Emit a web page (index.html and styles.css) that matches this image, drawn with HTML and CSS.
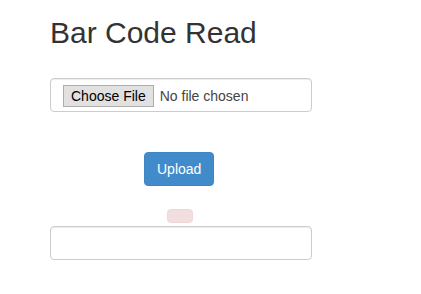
FILE: index.html
```html
<!DOCTYPE html>
<html lang="en">
<head>
<meta charset="utf-8">
<title>Bar Code Read</title>
<link rel="stylesheet" href="styles.css">
</head>
<body>
<div class="container">
  <h2 class="title">Bar Code Read</h2>
  <form class="form">
    <input class="form-control file-input" type="file" name="file">
    <div class="btn-row">
      <button class="btn btn-primary" type="button">Upload</button>
    </div>
    <div class="alert alert-danger"></div>
    <input class="form-control result" type="text">
  </form>
</div>
</body>
</html>
```

FILE: styles.css
```css
html, body {
  margin: 0;
  padding: 0;
  background: #fff;
}
body {
  font-family: "Liberation Sans", Arial, Helvetica, sans-serif;
  font-size: 14px;
  line-height: 1.42857;
  color: #333;
}
.container {
  padding: 16px 0 0 50px;
  width: 262px;
}
.title {
  margin: 0 0 29px;
  font-size: 30px;
  line-height: 33px;
  font-weight: 500;
  color: #333;
}
.form {
  display: flex;
  flex-direction: column;
  align-items: flex-start;
}
.form-control {
  display: block;
  box-sizing: border-box;
  width: 262px;
  height: 34px;
  margin: 0;
  padding: 6px 12px;
  font-family: "Liberation Sans", Arial, sans-serif;
  font-size: 14px;
  line-height: 20px;
  color: #555;
  background: #fff;
  border: 1px solid #ccc;
  border-radius: 4px;
  box-shadow: inset 0 1px 1px rgba(0, 0, 0, 0.075);
  outline: none;
}
.file-input {
  padding-top: 6px;
  color: #444;
}
.file-input::file-selector-button {
  font-family: "Liberation Sans", Arial, sans-serif;
  font-size: 14px;
  line-height: 16px;
  height: 22px;
  padding: 2px 7px;
  margin: 0 6px 0 0;
  color: #000;
  background: #e1e1e1;
  border: 1px solid #adadad;
  border-radius: 0;
}
.btn-row {
  margin: 40px 0 0 94px;
}
.btn {
  display: inline-block;
  box-sizing: border-box;
  height: 34px;
  padding: 6px 12px;
  font-family: "Liberation Sans", Arial, sans-serif;
  font-size: 14px;
  line-height: 20px;
  border: 1px solid transparent;
  border-radius: 4px;
  cursor: pointer;
}
.btn-primary {
  color: #fff;
  background: #428bca;
  border-color: #3f86c3;
}
.alert {
  box-sizing: border-box;
  width: 26px;
  height: 14px;
  margin: 23px 0 0 117px;
  border-radius: 4px;
}
.alert-danger {
  background: #f2dede;
  border: 1px solid #efd6d9;
}
.result {
  margin-top: 3px;
}
```
